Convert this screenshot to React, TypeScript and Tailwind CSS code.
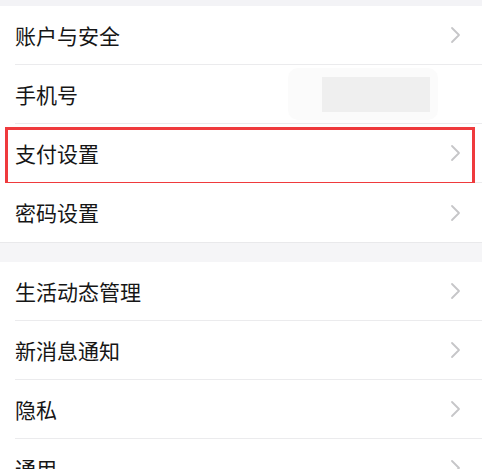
const Chevron = () => (
  <svg width="12" height="18" viewBox="0 0 12 18" fill="none" className="shrink-0">
    <path d="M2 2l7 7-7 7" stroke="#c6c6c8" strokeWidth="1.8" strokeLinecap="round" strokeLinejoin="round" />
  </svg>
);

type RowProps = {
  label: string;
  last?: boolean;
  arrow?: boolean;
  highlight?: boolean;
  extra?: React.ReactNode;
};

const Row = ({ label, last, arrow = true, highlight, extra }: RowProps) => (
  <div className="relative h-[59px] flex items-stretch pl-[15px] bg-white">
    <div className={`flex-1 flex items-center pr-[20px] ${last ? "" : "border-b border-[#ebebed]"}`}>
      <span className="flex-1 text-[21px] leading-none text-[#161616]">{label}</span>
      {extra}
      {arrow && <Chevron />}
    </div>
    {highlight && (
      <div className="absolute left-[5px] right-[7px] top-[3px] h-[58px] border-[3px] border-[#ef3a3d]"></div>
    )}
  </div>
);

export default function App() {
  return (
    <div
      className="w-[482px] h-[469px] overflow-hidden bg-white"
      style={{ fontFamily: '"Noto Sans CJK SC", "Noto Sans", sans-serif' }}
    >
      <div className="h-[6px] bg-[#f3f3f6]"></div>
      <Row label="账户与安全" />
      <Row
        label="手机号"
        arrow={false}
        extra={
          <div className="mr-[24px] w-[150px] h-[52px] rounded-[10px] bg-[#fbfbfb] flex items-center justify-end pr-[8px]">
            <div className="w-[108px] h-[35px] bg-[#efefef]"></div>
          </div>
        }
      />
      <Row label="支付设置" highlight />
      <Row label="密码设置" last />
      <div className="h-[20px] bg-[#f5f5f7] border-t border-[#e9e9eb]"></div>
      <Row label="生活动态管理" />
      <Row label="新消息通知" />
      <Row label="隐私" />
      <Row label="通用" />
    </div>
  );
}
